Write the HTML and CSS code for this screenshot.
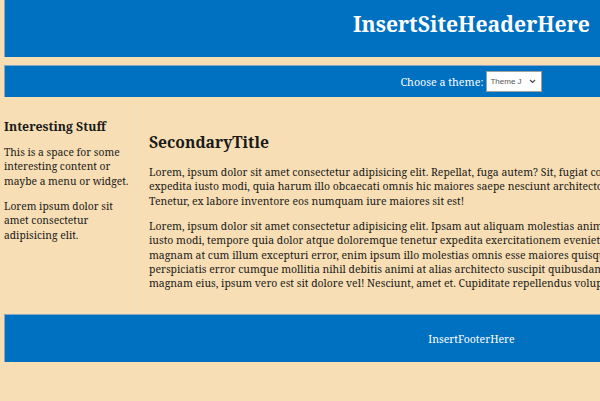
FILE: index.html
```html
<!DOCTYPE html>
<html lang="en">
<head>
<meta charset="utf-8">
<title>Site</title>
<link rel="stylesheet" href="styles.css">
</head>
<body>
<div class="page">
  <header class="site-header">
    <h1 class="site-title">InsertSiteHeaderHere</h1>
  </header>
  <nav class="theme-bar">
    <label class="theme-label" for="theme">Choose a theme:</label>
    <div class="select-box" id="theme">
      <span class="select-text">Theme J</span>
      <svg class="chev" width="7" height="5" viewBox="0 0 7 5"><path d="M1 1 L3.5 3.5 L6 1" fill="none" stroke="#444" stroke-width="1.1"/></svg>
    </div>
  </nav>
  <div class="content">
    <aside class="sidebar">
      <h3 class="side-title">Interesting Stuff</h3>
      <p>This is a space for some interesting content or maybe a menu or widget.</p>
      <p>Lorem ipsum dolor sit amet consectetur adipisicing elit.</p>
    </aside>
    <main class="main">
      <h2 class="main-title">SecondaryTitle</h2>
      <p>Lorem, ipsum dolor sit amet consectetur adipisicing elit. Repellat, fuga autem? Sit, fugiat consequatur, nostrum expedita iusto modi, quia harum illo obcaecati omnis hic maiores saepe nesciunt architecto eveniet excepturi? Tenetur, ex labore inventore eos numquam iure maiores sit est!</p>
      <p>Lorem, ipsum dolor sit amet consectetur adipisicing elit. Ipsam aut aliquam molestias animi, voluptatum quas iusto modi, tempore quia dolor atque doloremque tenetur expedita exercitationem eveniet, delectus sequi magnam at cum illum excepturi error, enim ipsum illo molestias omnis esse maiores quisquam ducimus perspiciatis error cumque mollitia nihil debitis animi at alias architecto suscipit quibusdam, consectetur quae magnam eius, ipsum vero est sit dolore vel! Nesciunt, amet et. Cupiditate repellendus voluptate harum.</p>
    </main>
    <div class="right-col"></div>
  </div>
  <footer class="site-footer">
    <p class="footer-text">InsertFooterHere</p>
  </footer>
</div>
</body>
</html>
```

FILE: styles.css
```css
html, body {
  margin: 0;
  padding: 0;
  background: #f7deb4;
  overflow: hidden;
}
body {
  font-family: "Noto Serif", "DejaVu Serif", serif;
  color: #1a1a1a;
}
.page {
  width: 934px;
  margin-left: 4px;
}
.site-header {
  background: #0070c1;
  border-left: 1px solid #8aa6c6;
  height: 57px;
  box-sizing: border-box;
  padding-top: 9px;
  display: flex;
  align-items: flex-start;
  justify-content: center;
}
.site-title {
  margin: 0;
  color: #fff;
  font-size: 21.2px;
  font-weight: bold;
}
.theme-bar {
  margin-top: 8px;
  background: #0070c1;
  border-top: 1px solid #8aa6c6;
  border-left: 1px solid #8aa6c6;
  height: 31px;
  display: flex;
  align-items: center;
  justify-content: center;
  gap: 3px;
}
.theme-label {
  color: #fff;
  font-size: 10.7px;
}
.select-box {
  background: #fff;
  border: 1px solid #a0a0a0;
  display: flex;
  align-items: center;
  justify-content: space-between;
  padding: 0 5px 0 3px;
  box-sizing: border-box;
  width: 56px;
  height: 21px;
}
.select-text {
  font-family: "Liberation Sans", sans-serif;
  font-size: 8px;
  color: #555;
}
.content {
  display: flex;
  min-height: 210px;
  padding-top: 7px;
}
.sidebar {
  width: 131px;
  flex: none;
  font-size: 10.3px;
}
.side-title {
  margin: 13.5px 0 10.5px;
  font-size: 12.3px;
  font-weight: bold;
}
.sidebar p {
  margin: 0 0 10.5px;
  line-height: 14.4px;
}
.main {
  flex: none;
  width: 572.5px;
  border-left: 1px solid #ece0cb;
  padding: 0 13px;
  font-size: 10.45px;
}
.right-col {
  flex: 1;
}
.main-title {
  margin: 27px 0 12px;
  font-size: 15.7px;
  font-weight: bold;
}
.main p {
  margin: 0 0 10.5px;
  line-height: 14.4px;
}
.site-footer {
  background: #0070c1;
  border-top: 1px solid #8aa6c6;
  border-left: 1px solid #8aa6c6;
  height: 47px;
  display: flex;
  align-items: center;
  justify-content: center;
}
.footer-text {
  margin: 0;
  color: #fff;
  font-size: 10.5px;
}
```
